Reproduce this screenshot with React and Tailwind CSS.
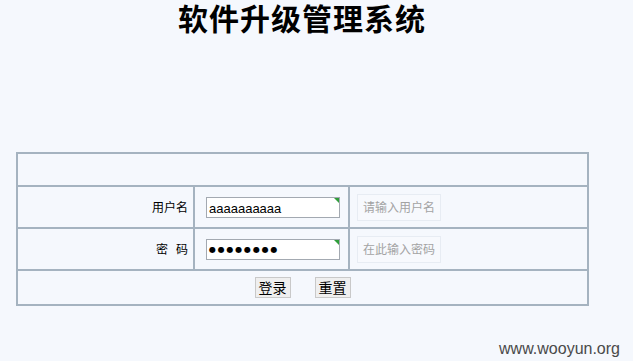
import React from "react";

const cjk = { fontFamily: '"Noto Sans CJK SC", "Noto Sans", sans-serif' };

function Field({ children }) {
  return (
    <div className="relative ml-[11px] flex h-[21px] w-[134px] items-center border border-[#a3a9b1] bg-white pl-[2px] pt-[2px]">
      {children}
      <div className="absolute right-0 top-0 h-0 w-0 border-l-[5px] border-t-[5px] border-l-transparent border-t-[#2f9e3a]" />
    </div>
  );
}

function Hint({ children }) {
  return (
    <div
      className="ml-[7px] flex h-[27px] w-[84px] items-center border border-[#e7ecf3] bg-[#f7f9fd] pl-[5px] text-[12px] text-[#a3a3a3]"
      style={cjk}
    >
      {children}
    </div>
  );
}

export default function App() {
  return (
    <div className="relative h-[361px] w-[633px] overflow-hidden bg-[#f5f8fd]" style={cjk}>
      <div className="w-[604px]">
        <h1 className="h-[34px] text-center text-[30px] font-bold leading-[34px] tracking-[1px] text-black">
          软件升级管理系统
        </h1>
        <div className="ml-[16px] mt-[118px] w-[573px] border-2 border-[#a5b3c0]">
          <div className="h-[33px] border-b-2 border-[#a5b3c0]" />
          <div className="flex h-[42px] border-b-2 border-[#a5b3c0]">
            <div className="flex w-[177px] items-center justify-end border-r-2 border-[#a5b3c0] pr-[5px] text-[12px] text-black">
              用户名
            </div>
            <div className="flex w-[155px] items-center border-r-2 border-[#a5b3c0]">
              <Field>
                <span className="text-[13px] leading-[15px] text-black" style={{ fontFamily: '"Liberation Sans", Arial, sans-serif' }}>
                  aaaaaaaaaa
                </span>
              </Field>
            </div>
            <div className="flex flex-1 items-center">
              <Hint>请输入用户名</Hint>
            </div>
          </div>
          <div className="flex h-[42px] border-b-2 border-[#a5b3c0]">
            <div className="flex w-[177px] items-center justify-end border-r-2 border-[#a5b3c0] pr-[5px] text-[12px] text-black">
              <span>密</span>
              <span className="ml-[8px]">码</span>
            </div>
            <div className="flex w-[155px] items-center border-r-2 border-[#a5b3c0]">
              <Field>
                <span
                  className="text-[8px] leading-[12px] tracking-[1.8px] text-black"
                  style={{ fontFamily: '"DejaVu Sans", sans-serif' }}
                >
                  ●●●●●●●●
                </span>
              </Field>
            </div>
            <div className="flex flex-1 items-center">
              <Hint>在此输入密码</Hint>
            </div>
          </div>
          <div className="flex h-[33px] items-center justify-center gap-[24px]">
            <button className="flex h-[21px] w-[36px] items-center justify-center border border-[#c9c9c9] bg-[#efefef] text-[14px] text-black">
              登录
            </button>
            <button className="flex h-[21px] w-[36px] items-center justify-center border border-[#c9c9c9] bg-[#efefef] text-[14px] text-black">
              重置
            </button>
          </div>
        </div>
      </div>
      <div
        className="absolute bottom-[3px] right-[13px] text-[16px] leading-[18px] text-[#4a4a4a]"
        style={{ fontFamily: '"Liberation Sans", Arial, sans-serif' }}
      >
        www.wooyun.org
      </div>
    </div>
  );
}
